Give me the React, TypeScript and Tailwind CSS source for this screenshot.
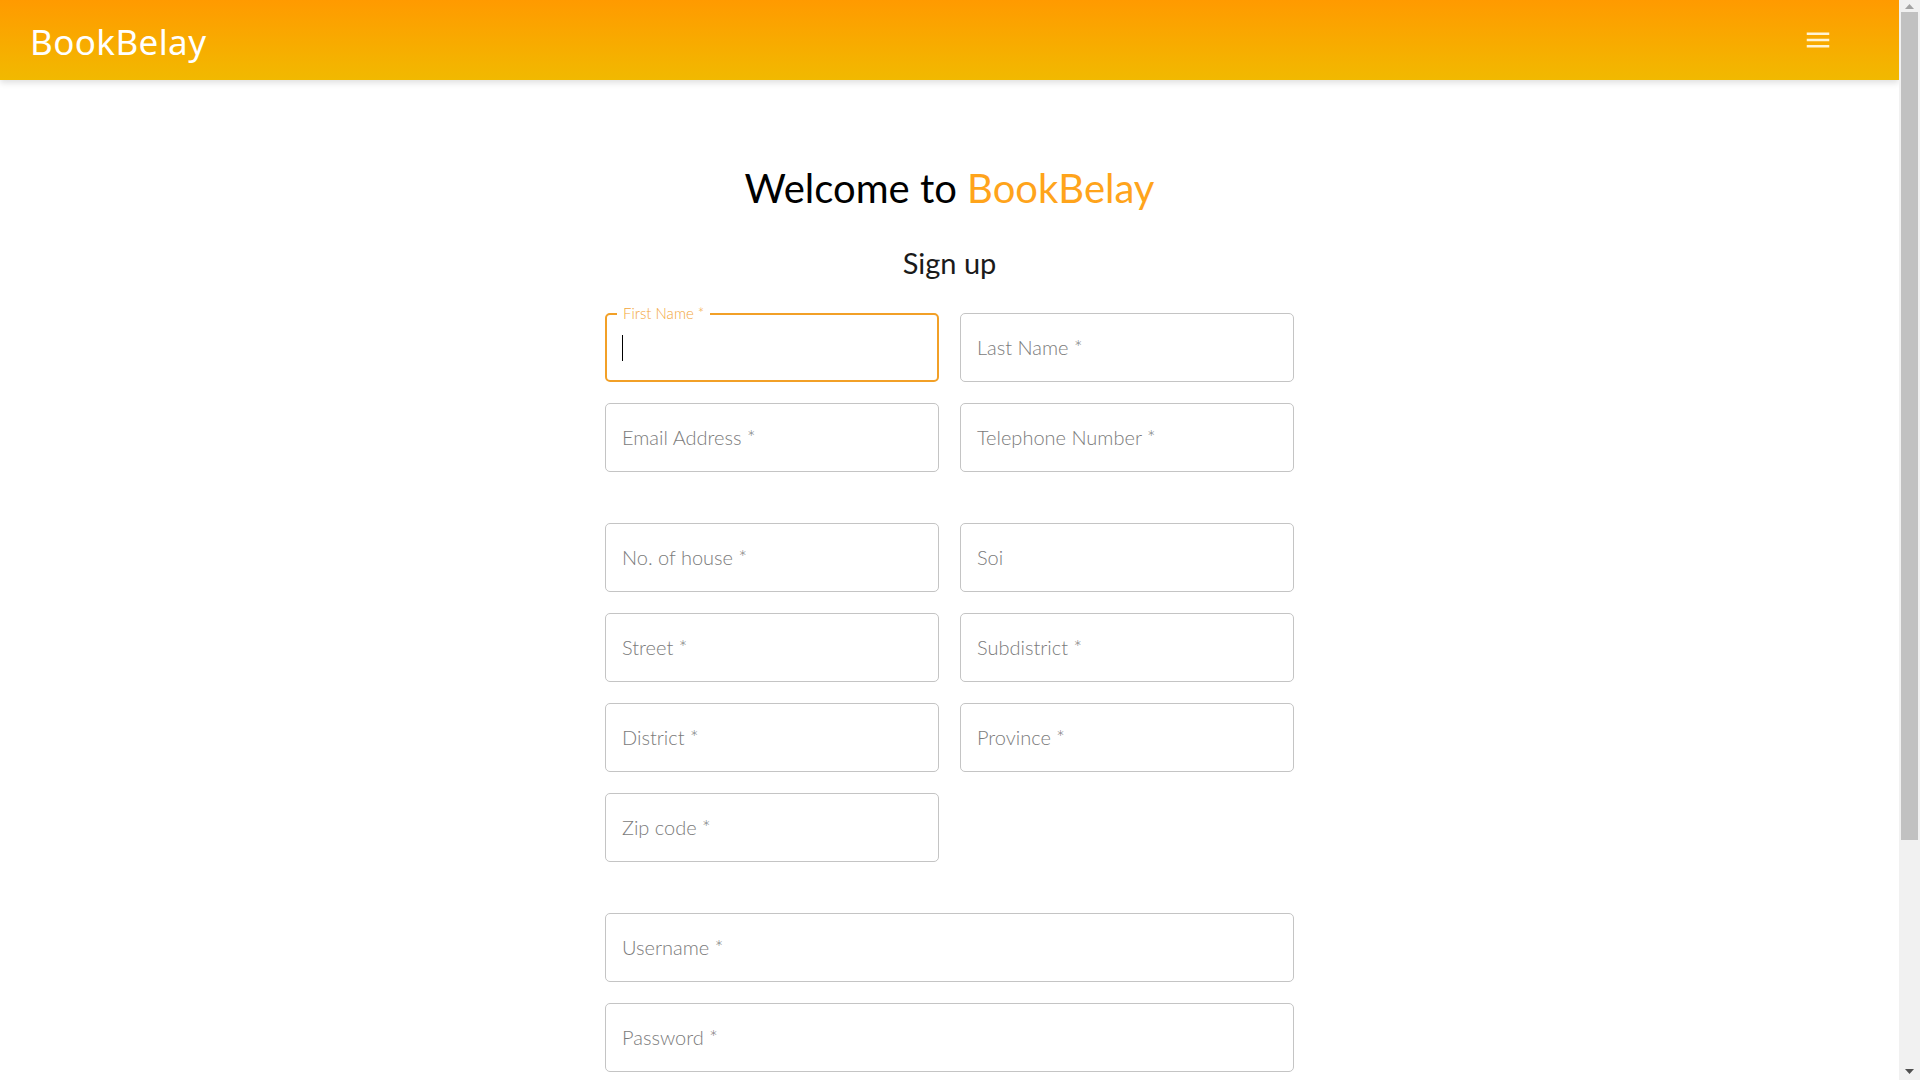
import React from "react";

const Field = ({ label }: { label: string }) => (
  <div className="h-[69px] rounded-[5px] border border-[#c4c4c4] flex items-center pl-[16px] pb-[2px] text-[20px] font-light text-[#7b7b7b] font-['Lato',sans-serif]">
    {label}
  </div>
);

const FocusedField = ({ label }: { label: string }) => (
  <div className="relative h-[69px] rounded-[5px] border-2 border-[#f2a027] flex items-center pl-[15px]">
    <span className="absolute left-[10px] top-[-12px] bg-white px-[6px] text-[15px] leading-[20px] font-light text-[#f3a63a] font-['Lato',sans-serif]">
      {label}
    </span>
    <span className="block w-[1px] h-[26px] bg-black" />
  </div>
);

const Scrollbar = () => (
  <div className="w-[21px] h-screen bg-[#f1f1f1] flex flex-col items-center shrink-0">
    <div className="h-[12px] w-full flex items-center justify-center">
      <svg width="9" height="5" viewBox="0 0 9 5">
        <path d="M0 5 L4.5 0 L9 5 Z" fill="#a3a3a3" />
      </svg>
    </div>
    <div className="w-[17px] h-[828px] bg-[#c1c1c1]" />
    <div className="flex-1" />
    <div className="h-[17px] w-full flex items-center justify-center">
      <svg width="9" height="5" viewBox="0 0 9 5">
        <path d="M0 0 L9 0 L4.5 5 Z" fill="#505050" />
      </svg>
    </div>
  </div>
);

export default function App() {
  return (
    <div className="h-screen flex overflow-hidden bg-white">
      <div className="flex-1 h-screen overflow-hidden">
        <header className="h-[80px] bg-gradient-to-b from-[#ff9a00] to-[#f1b900] shadow-[0_3px_6px_rgba(0,0,0,0.12)] flex items-center justify-between pl-[30px] pr-[66px] relative z-10">
          <div className="text-white text-[35px] mt-[3px] font-['Noto_Sans',sans-serif] tracking-[0.4px] leading-none">
            BookBelay
          </div>
          <svg width="30" height="30" viewBox="0 0 24 24" fill="#fff4d6">
            <path d="M3 18h18v-2H3v2zm0-5h18v-2H3v2zm0-7v2h18V6H3z" />
          </svg>
        </header>
        <main className="w-[689px] mx-auto pt-[84px] pb-[281px] font-['Lato',sans-serif]">
          <h1 className="text-center text-[40px] leading-[48px] text-black">
            Welcome to <span className="text-[#ffa41b]">BookBelay</span>
          </h1>
          <h2 className="text-center text-[29px] leading-[36px] text-[#1a1a1a] mt-[33px]">Sign up</h2>
          <div className="mt-[32px] grid grid-cols-2 gap-x-[21px] gap-y-[21px]">
            <FocusedField label="First Name *" />
            <Field label="Last Name *" />
            <Field label="Email Address *" />
            <Field label="Telephone Number *" />
          </div>
          <div className="mt-[51px] grid grid-cols-2 gap-x-[21px] gap-y-[21px]">
            <Field label="No. of house *" />
            <Field label="Soi" />
            <Field label="Street *" />
            <Field label="Subdistrict *" />
            <Field label="District *" />
            <Field label="Province *" />
            <Field label="Zip code *" />
          </div>
          <div className="mt-[51px] flex flex-col gap-[21px]">
            <Field label="Username *" />
            <Field label="Password *" />
          </div>
        </main>
      </div>
      <Scrollbar />
    </div>
  );
}
